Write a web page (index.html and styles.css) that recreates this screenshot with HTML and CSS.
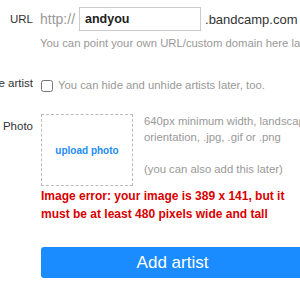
FILE: index.html
```html
<!DOCTYPE html>
<html>
<head>
<link rel="stylesheet" href="styles.css">
</head>
<body>

<div class="artistForm">
  <div class="formLabel labelUrl">URL</div>
  <div class="formField">
    <div class="urlRow">
      <span class="urlPrefix">http://</span>
      <input class="urlInput" type="text" value="andyou">
      <span class="urlSuffix">.bandcamp.com</span>
    </div>
    <div class="hint hintUrl">You can point your own URL/custom domain here later.</div>
  </div>

  <div class="formLabel labelHide">Hide artist</div>
  <div class="formField">
    <label class="hideRow">
      <input class="hideCheck" type="checkbox">
      <span class="hint">You can hide and unhide artists later, too.</span>
    </label>
  </div>

  <div class="formLabel labelPhoto">Photo</div>
  <div class="formField">
    <div class="photoRow">
      <div class="photoDrop"><a class="uploadLink">upload photo</a></div>
      <div class="photoNotes">
        <p>640px minimum width, landscape orientation, .jpg, .gif or .png</p>
        <p>(you can also add this later)</p>
      </div>
    </div>
    <div class="photoError">Image error: your image is 389 x 141, but it must be at least 480 pixels wide and tall</div>
  </div>

  <div class="formLabel"></div>
  <div class="formField">
    <button class="addBtn">Add artist</button>
  </div>
</div>

</body>
</html>
```

FILE: styles.css
```css
/* 新增藝人表單 */
body {
  margin: 0;
  font-family: "Liberation Sans", Arial, sans-serif;
  color: #333;
  background: #fff;
  overflow: hidden;
}

/* 標籤欄往左推出畫面，只露出右邊 */
.artistForm {
  display: grid;
  grid-template-columns: 100px 1fr;
  column-gap: 7px;
  align-items: start;
  margin-left: -67px;
  padding-top: 7px;
}

.formLabel {
  font-size: 11.5px;
  line-height: 13px;
  text-align: right;
  white-space: nowrap;
}
.labelUrl { padding-top: 6px; }
.labelHide { padding-top: 27px; }
.labelPhoto { padding-top: 28px; }

.formField {
  min-width: 0;
  white-space: nowrap;
}

.urlRow {
  display: flex;
  align-items: center;
}
.urlPrefix {
  color: #999;
  font-size: 14px;
  margin-right: 4px;
}
.urlInput {
  width: 122px;
  height: 24px;
  box-sizing: border-box;
  border: 1px solid #ccc;
  padding: 0 5px;
  font-family: inherit;
  font-size: 12.5px;
  font-weight: bold;
  color: #222;
  outline: none;
}
.urlSuffix {
  font-size: 13px;
  margin-left: 4px;
}

.hint {
  font-size: 11.3px;
  line-height: 13px;
  color: #999;
}
.hintUrl {
  margin-top: 6px;
}

.hideRow {
  display: flex;
  align-items: center;
  gap: 5px;
  margin-top: 29px;
}
.hideCheck {
  margin: 0 0 0 1px;
  width: 12px;
  height: 12px;
}

.photoRow {
  display: flex;
  align-items: flex-start;
  gap: 11px;
  margin-top: 22px;
  margin-left: 1px;
}
.photoDrop {
  flex-shrink: 0;
  width: 92px;
  height: 72px;
  box-sizing: border-box;
  border: 1px dashed #bbb;
  display: flex;
  align-items: center;
  justify-content: center;
}
.uploadLink {
  color: #1c8cf7;
  font-size: 10px;
  font-weight: bold;
}
.photoNotes {
  flex-shrink: 0;
  width: 172px;
  margin-top: -1px;
  font-size: 11.3px;
  line-height: 16px;
  color: #999;
  white-space: normal;
}
.photoNotes p {
  margin: 0 0 16px;
}
.photoNotes p:last-child {
  margin-bottom: 0;
}

.photoError {
  margin: 1px 0 0 1px;
  width: 252px;
  color: #d70000;
  font-size: 12px;
  font-weight: bold;
  line-height: 18px;
  white-space: normal;
}

.addBtn {
  display: block;
  margin: 24px 0 0 1px;
  width: 263px;
  height: 31px;
  border: none;
  border-radius: 3px;
  background: #1a8cff;
  color: #fff;
  font-family: inherit;
  font-size: 17px;
}
```
